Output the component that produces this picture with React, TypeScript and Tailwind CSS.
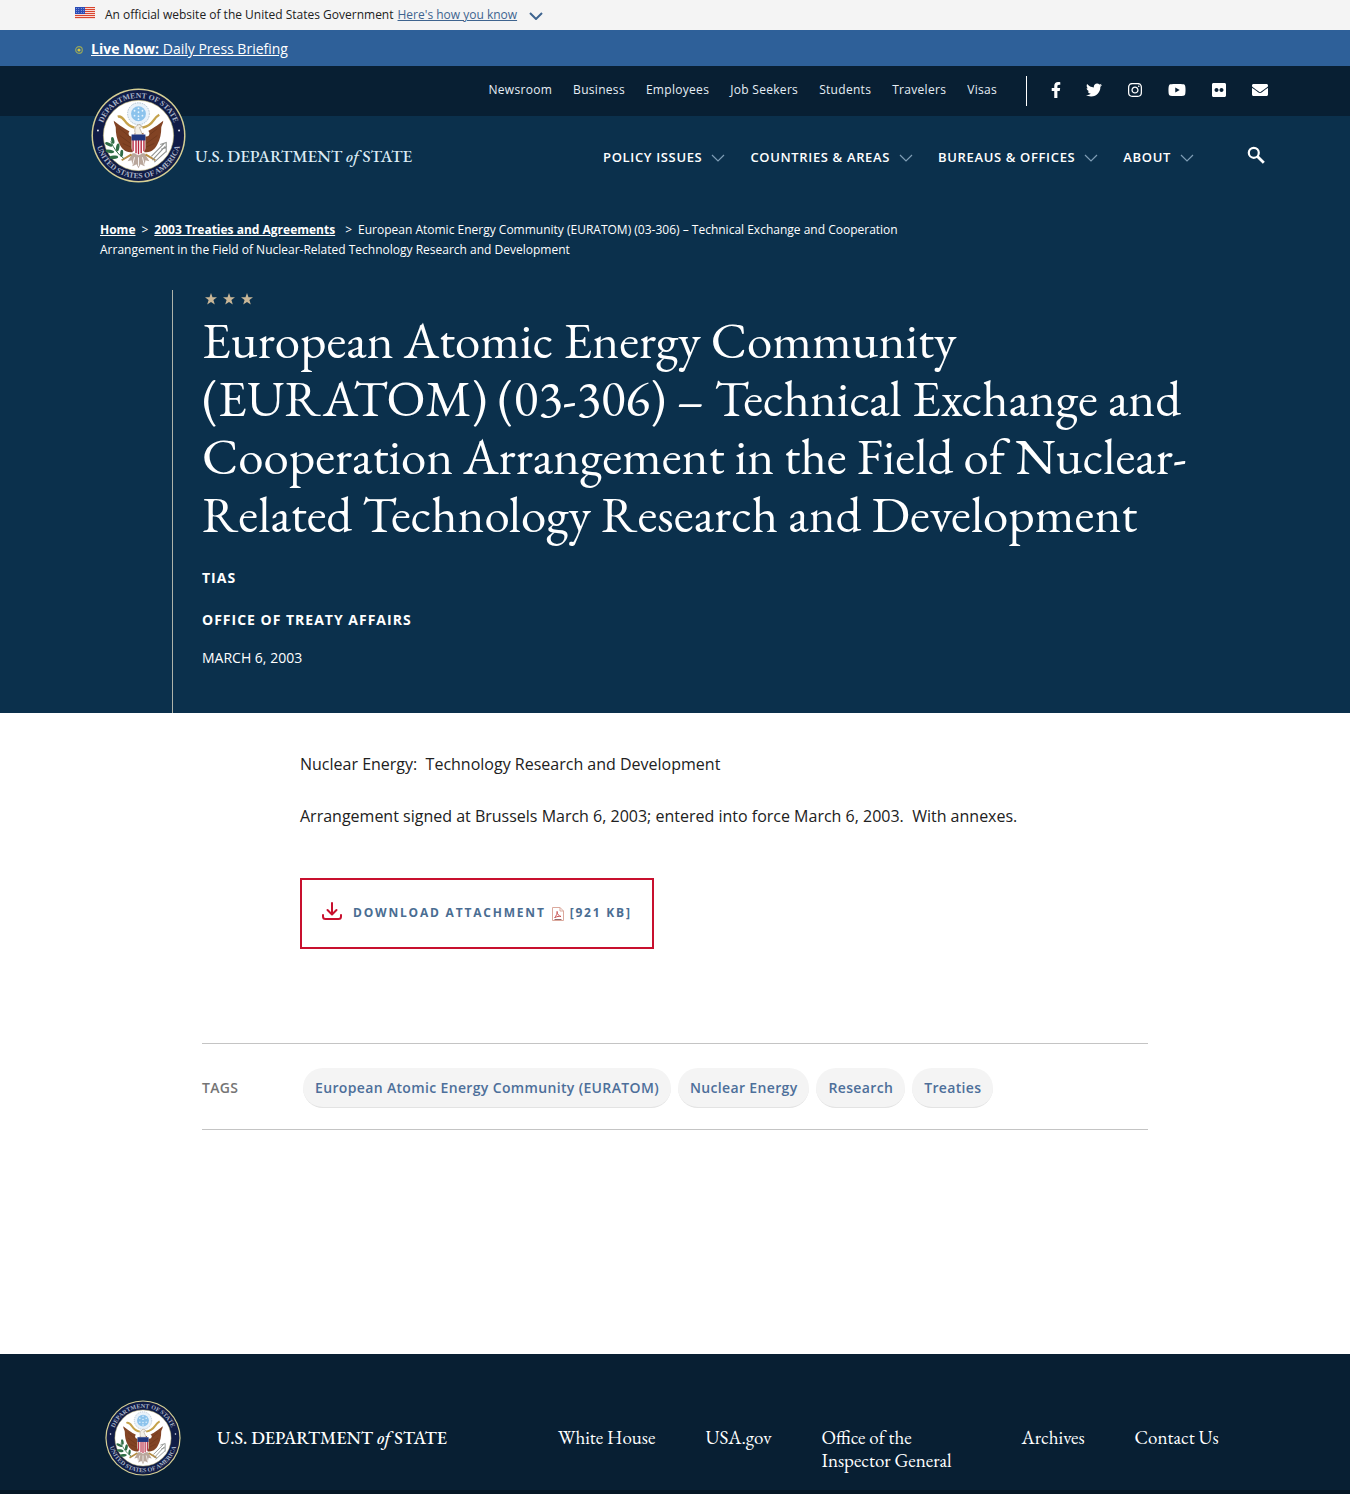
import { useId } from "react";
import { FaFacebookF, FaTwitter, FaInstagram, FaYoutube, FaFlickr, FaEnvelope } from "react-icons/fa";

const SERIF = "font-['EB_Garamond','Liberation_Serif',serif]";

const utilityLinks = ["Newsroom", "Business", "Employees", "Job Seekers", "Students", "Travelers", "Visas"];
const navItems = ["Policy Issues", "Countries & Areas", "Bureaus & Offices", "About"];
const tags = ["European Atomic Energy Community (EURATOM)", "Nuclear Energy", "Research", "Treaties"];
const social = [
  { label: "Facebook", Icon: FaFacebookF, width: "w-2.5" },
  { label: "Twitter", Icon: FaTwitter, width: "w-4" },
  { label: "Instagram", Icon: FaInstagram, width: "w-4" },
  { label: "YouTube", Icon: FaYoutube, width: "w-[18px]" },
  { label: "Flickr", Icon: FaFlickr, width: "w-4" },
  { label: "Email", Icon: FaEnvelope, width: "w-4" },
];

function Flag() {
  return (
    <svg viewBox="0 0 20 12" className="h-3 w-5" aria-hidden="true">
      <rect width="20" height="12" fill="#fff" />
      {[0, 2, 4, 6, 8, 10].map((y) => (
        <rect key={y} y={y} width="20" height="1.2" fill="#d8452f" />
      ))}
      <rect width="10" height="7" fill="#2a4bb5" />
      {[1.5, 3.5, 5.5].map((y) =>
        [1.5, 4, 6.5, 9].map((x) => <circle key={`${x}-${y}`} cx={x - 0.2} cy={y} r="0.45" fill="#dfe6ff" />),
      )}
    </svg>
  );
}

function Seal({ className }: { className: string }) {
  const id = useId();
  return (
    <svg viewBox="0 0 96 96" className={className} role="img" aria-label="Department of State seal">
      <defs>
        <path id={`${id}t`} d="M10 48a38 38 0 0 1 76 0" />
        <path id={`${id}b`} d="M4.800 48a43.200 43.200 0 0 0 86.400 0" />
      </defs>
      <circle cx="48" cy="48" r="47.5" fill="#d6cf94" />
      <circle cx="48" cy="48" r="46" fill="#101c46" />
      <circle cx="48" cy="48" r="35.500" fill="#fff" stroke="#c9bd7b" strokeWidth="0.6" />
      <g fill="#aab4c8" fontSize="7.800" fontWeight="bold" fontFamily="Liberation Serif, serif" textAnchor="middle">
        <text><textPath href={`#${id}t`} startOffset="50%">DEPARTMENT OF STATE</textPath></text>
        <text><textPath href={`#${id}b`} startOffset="50%">UNITED STATES OF AMERICA</textPath></text>
      </g>
      <circle cx="7" cy="43" r="1" fill="#e7eaf2" />
      <circle cx="89" cy="43" r="1" fill="#e7eaf2" />
      {/* glory with constellation */}
      <circle cx="48" cy="26" r="11" fill="#e9f2fa" stroke="#a9bccb" strokeWidth="0.9" strokeDasharray="1.5 1" />
      <circle cx="48" cy="26" r="7.500" fill="#8cc3ec" />
      <g fill="#e9f6ff">
        {[[48, 20.5], [44, 23], [52, 23], [48, 24.5], [44, 28], [52, 28], [48, 28.5], [48, 31.5]].map(([x, y]) => (
          <circle key={`${x}-${y}`} cx={x} cy={y} r="0.9" />
        ))}
      </g>
      {/* ribbon */}
      <path d="M27 29c3-1 5 1 7 4s5 6 10 7M69 27c-2 1-4 3-6 6s-6 6-11 7" fill="none" stroke="#c5a24b" strokeWidth="2.4" />
      {/* wings */}
      <g fill="#824324">
        <path d="M45 46c-7-2-13-6-22-13 0 3 2 5 2 7 0 6 1 12 4 17 3 6 7 8 13 8l3-9z" />
        <path d="M51 46c7-2 13-6 22-13 0 3-2 5-2 7 0 6-1 12-4 17-3 6-7 8-13 8l-3-9z" />
      </g>
      <path d="M29 41l11 9M29 48l11 8M32 56l9 4M67 41l-11 9M67 48l-11 8M64 56l-9 4" stroke="#6b351c" strokeWidth="0.7" />
      {/* tail and legs */}
      <path d="M42 66l-5 8 4-1 1 6 4-2 2 4 2-4 4 2 1-6 4 1-5-8z" fill="#b9a79c" />
      <path d="M44 70l-2 8M48 70v9M52 70l2 8" stroke="#fff" strokeWidth="0.9" />
      <path d="M41 67l-10 6M55 67l10 6" stroke="#b58d45" strokeWidth="2" />
      {/* olive branch */}
      <path d="M20 54c3 7 7 13 13 17" stroke="#2f6d45" strokeWidth="1" fill="none" />
      <g fill="#2f6d45">
        <ellipse cx="18" cy="57" rx="4" ry="1.600" transform="rotate(25 18 57)" />
        <ellipse cx="22" cy="53" rx="3.500" ry="1.600" transform="rotate(80 22 53)" />
        <ellipse cx="19" cy="64" rx="4.500" ry="1.700" transform="rotate(10 19 64)" />
        <ellipse cx="27" cy="60" rx="4" ry="1.700" transform="rotate(100 27 60)" />
        <ellipse cx="23" cy="70" rx="4.500" ry="1.700" transform="rotate(-5 23 70)" />
        <ellipse cx="31" cy="66" rx="3.500" ry="1.500" transform="rotate(95 31 66)" />
      </g>
      {/* arrows */}
      <path d="M62 73l13-14M61 69l13-13M64 75l12-11M70 57l6-2v5M71 62l5-2v5" stroke="#8e918f" strokeWidth="1.1" fill="none" />
      {/* head */}
      <path d="M45 47c-2-5 0-10 4-10l3 2-3 1 3 7z" fill="#f3efe6" stroke="#8d7a61" strokeWidth="0.5" />
      <circle cx="41" cy="46" r="3" fill="#fff" />
      <circle cx="56" cy="46" r="3" fill="#fff" />
      {/* shield */}
      <path d="M41 47h14v13c0 4-3 6-7 8-4-2-7-4-7-8z" fill="#fff" />
      <path d="M42.500 52v12M45.500 52v14M48 52v15M50.700 52v14M53.500 52v12" stroke="#b5263e" strokeWidth="1.4" />
      <path d="M41 47h14v6H41z" fill="#20377f" />
    </svg>
  );
}

function Wordmark({ className }: { className: string }) {
  return (
    <span className={`${SERIF} font-medium whitespace-nowrap ${className}`}>
      U.S. DEPARTMENT <i>of</i> STATE
    </span>
  );
}

function Chevron({ className, strong }: { className: string; strong?: boolean }) {
  return (
    <svg viewBox="0 0 14 8" className={className} fill="none" stroke="currentColor" strokeWidth={strong ? 2 : 1.2} aria-hidden="true">
      <path d="M1 1l6 6 6-6" />
    </svg>
  );
}

function DownloadIcon() {
  return (
    <svg viewBox="0 0 20 18" className="mb-1 h-[18px] w-5" fill="none" stroke="#c8102e" strokeWidth="2" strokeLinecap="round" strokeLinejoin="round" aria-hidden="true">
      <path d="M10 1v11M5.500 8l4.500 4.500L14.500 8M1 13v1.500c0 1.500 1 2.500 2.500 2.500h13c1.500 0 2.500-1 2.500-2.500V13" />
    </svg>
  );
}

function PdfIcon() {
  return (
    <svg viewBox="0 0 12 14" className="h-3.5 w-3" fill="none" aria-hidden="true">
      <path d="M.5.500h7.500l3.500 3.500v9.500H.5z" fill="#fff" stroke="#dba99d" />
      <path d="M8 .500V4h3.500" stroke="#dba99d" />
      <path d="M5 4c1 2-1 5-2.500 7M5 5c0 2 2 4 4 4.500-2-.5-4 0-6 1" stroke="#cc5555" />
      <path d="M2.500 12.500h7" stroke="#9a6a6a" />
    </svg>
  );
}

export default function App() {
  return (
    <div className="bg-white font-['Open_Sans',sans-serif] text-[#212121]">
      <div className="bg-[#f4f4f4]">
        <div className="mx-auto flex h-[30px] max-w-[1200px] items-center text-xs">
          <div className="mr-2.5 pb-1"><Flag /></div>
          <p>An official website of the United States Government</p>
          <button type="button" className="ml-1 flex items-center gap-3 text-[#3e648f]">
            <span className="underline">Here&#39;s how you know</span>
            <Chevron className="mt-0.5 h-2 w-3.5" strong />
          </button>
        </div>
      </div>

      <div className="bg-[#2e6099]">
        <div className="mx-auto flex h-9 max-w-[1200px] items-center gap-2 pt-0.5 text-sm text-white">
          <svg viewBox="0 0 8 8" className="mt-0.5 size-2" aria-hidden="true">
            <circle cx="4" cy="4" r="3.300" fill="none" stroke="#96a65b" strokeWidth="1.2" />
            <circle cx="4" cy="4" r="1.600" fill="#d3c744" />
          </svg>
          <a href="#live" className="underline"><b>Live Now:</b> Daily Press Briefing</a>
        </div>
      </div>

      <header className="bg-[linear-gradient(#081f33_50px,#0b304c_50px)] text-white">
        <div className="mx-auto flex h-[134px] max-w-[1200px] justify-between pr-[7px] pl-4">
          <a href="#home" className="flex gap-[9px] pt-[22px]">
            <Seal className="size-[95px]" />
            <Wordmark className="mt-14 text-[17px] leading-6 text-[#dcecf5]" />
          </a>
          <div className="flex flex-col items-end">
            <div className="flex h-[50px] items-center">
              <nav aria-label="Utility" className="flex gap-[21px] pb-0.5 text-xs tracking-wide text-[#e6eef5]">
                {utilityLinks.map((t) => <a key={t} href="#utility">{t}</a>)}
              </nav>
              <div className="ml-[29px] flex h-[30px] items-center gap-[25px] border-l border-white pb-0.5 pl-6">
                {social.map(({ label, Icon, width }) => (
                  <a key={label} href="#social" aria-label={label}><Icon className={`h-4 ${width}`} /></a>
                ))}
              </div>
            </div>
            <div className="mr-[3px] flex items-center pt-8">
              <nav aria-label="Main" className="flex gap-[25px] text-[13px] font-semibold tracking-wider">
                {navItems.map((t) => (
                  <button key={t} type="button" className="flex items-center gap-[9px] uppercase">
                    {t}
                    <Chevron className="h-2 w-3.5 text-[#7f9db5]" />
                  </button>
                ))}
              </nav>
              <button type="button" aria-label="Search" className="-mt-1.5 ml-[53px]">
                <svg viewBox="0 0 18 18" className="size-[18px]" fill="none" stroke="#fff" strokeWidth="2.200">
                  <circle cx="6.800" cy="6.800" r="5" />
                  <path d="M10.500 10.500l6.300 6.300" strokeWidth="2.800" />
                </svg>
              </button>
            </div>
          </div>
        </div>
      </header>

      <section className="bg-[#0b304c] pt-5 text-white">
        <div className="mx-auto max-w-[1200px]">
          <nav aria-label="Breadcrumb" className="ml-[25px] max-w-[850px] text-xs leading-5">
            <a href="#home" className="font-bold underline">Home</a>
            <span className="mx-1.5">&gt;</span>
            <a href="#treaties" className="font-bold underline">2003 Treaties and Agreements</a>
            <span className="mr-1.5 ml-2.5">&gt;</span>
            European Atomic Energy Community (EURATOM) (03-306) – Technical Exchange and Cooperation Arrangement in the Field of Nuclear-Related Technology Research and Development
          </nav>
          <div className="mt-[30px] ml-[97px] border-l border-[#aeb3aa] pb-[45px] pl-[29px]">
            <div className="flex gap-1.5 pt-[3px] pl-[3px]" aria-hidden="true">
              {[0, 1, 2].map((i) => (
                <svg key={i} viewBox="0 0 12 12" className="size-3" fill="#c9b697">
                  <path d="M6 0l1.500 4.200H12L8.400 7l1.400 4.600L6 8.900l-3.800 2.700L3.600 7 0 4.200h4.500z" />
                </svg>
              ))}
            </div>
            <h1 className={`${SERIF} mt-1.5 max-w-[1010px] text-[51px] leading-[58px]`}>
              European Atomic Energy Community (EURATOM) (03-306) – Technical Exchange and Cooperation Arrangement in the Field of Nuclear-Related Technology Research and Development
            </h1>
            <p className="mt-[25px] text-sm leading-5 font-bold tracking-[1px]">TIAS</p>
            <p className="mt-[22px] text-sm leading-5 font-bold tracking-[1px]">OFFICE OF TREATY AFFAIRS</p>
            <p className="mt-[18px] text-sm leading-5">MARCH 6, 2003</p>
          </div>
        </div>
      </section>

      <main className="mx-auto max-w-[946px] pt-[38px] pb-56">
        <div className="pl-[98px]">
          <p className="leading-[26px] whitespace-pre-wrap">{"Nuclear Energy:  Technology Research and Development"}</p>
          <p className="mt-[26px] leading-[26px] whitespace-pre-wrap">{"Arrangement signed at Brussels March 6, 2003; entered into force March 6, 2003.  With annexes."}</p>
          <a href="#download" className="mt-[49px] inline-flex h-[71px] items-center border-2 border-[#c8102e] px-5 pb-0.5 text-xs font-bold tracking-[0.15em] text-[#4a6d92]">
            <DownloadIcon />
            <span className="ml-[11px]">DOWNLOAD ATTACHMENT</span>
            <span className="mx-1.5 pt-0.5"><PdfIcon /></span>
            [921 KB]
          </a>
        </div>
        <div className="mt-[94px] flex items-center border-y border-[#c4c4c4] pt-6 pb-[21px] text-sm font-semibold tracking-wide">
          <h2 className="w-[101px] text-[#757575]">TAGS</h2>
          <ul className="flex flex-wrap gap-[7px]">
            {tags.map((t) => (
              <li key={t}>
                <a href="#tag" className="flex h-10 items-center rounded-full border-b border-[#e3e3e3] bg-[#f4f4f4] px-3 text-[#4d6f9a]">{t}</a>
              </li>
            ))}
          </ul>
        </div>
      </main>

      <footer className="border-b-4 border-[#061826] bg-[#081f33] text-white">
        <div className="mx-auto flex h-[136px] max-w-[1200px] pl-[30px]">
          <a href="#home" className="flex pt-[46px]">
            <Seal className="size-[76px]" />
            <Wordmark className="w-[341px] pt-[26px] pl-9 text-[18px] leading-6" />
          </a>
          <nav aria-label="Footer" className={`${SERIF} ml-9 flex gap-[50px] pt-[72px] text-[19px] leading-[23px]`}>
            <a href="#whitehouse">White House</a>
            <a href="#usa">USA.gov</a>
            <a href="#oig" className="w-[150px]">Office of the Inspector General</a>
            <a href="#archives">Archives</a>
            <a href="#contact">Contact Us</a>
          </nav>
        </div>
      </footer>
    </div>
  );
}
